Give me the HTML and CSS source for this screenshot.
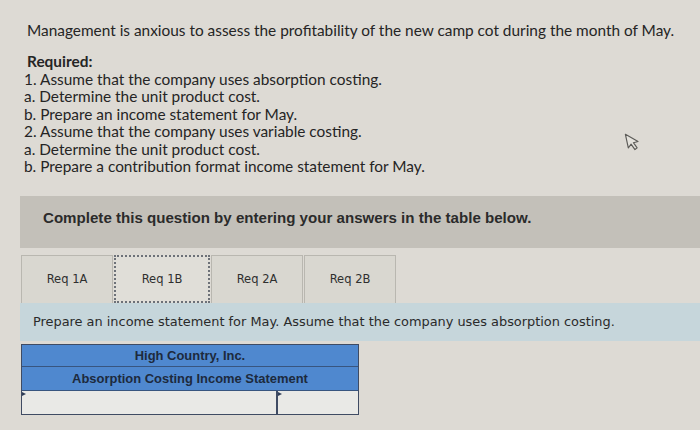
FILE: index.html
```html
<!DOCTYPE html>
<html>
<head>
<meta charset="utf-8">
<link rel="stylesheet" href="styles.css">
</head>
<body>
<div class="page">
  <div class="question">
    <p class="intro">Management is anxious to assess the profitability of the new camp cot during the month of May.</p>
    <div class="required">
      <div class="req-title">Required:</div>
      <div>1. Assume that the company uses absorption costing.</div>
      <div>a. Determine the unit product cost.</div>
      <div>b. Prepare an income statement for May.</div>
      <div>2. Assume that the company uses variable costing.</div>
      <div>a. Determine the unit product cost.</div>
      <div>b. Prepare a contribution format income statement for May.</div>
    </div>
  </div>
  <div class="band">Complete this question by entering your answers in the table below.</div>
  <div class="tabs">
    <div class="tab">Req 1A</div>
    <div class="tab active">Req 1B</div>
    <div class="tab">Req 2A</div>
    <div class="tab">Req 2B</div>
  </div>
  <div class="instr">Prepare an income statement for May. Assume that the company uses absorption costing.</div>
  <div class="stmt">
    <div class="hrow first">High Country, Inc.</div>
    <div class="hrow">Absorption Costing Income Statement</div>
    <div class="irow">
      <div class="cell c1"><span class="mark"></span></div>
      <div class="cell c2"><span class="mark"></span></div>
    </div>
  </div>
  <svg class="cursor" width="17" height="21" viewBox="0 0 14 18">
    <path d="M1.5 1.5 L1.5 13.5 L4.5 10.8 L6.8 16 L8.9 15 L6.7 10 L10.8 9.8 Z" fill="#e4e2dc" stroke="#5c5b58" stroke-width="1" stroke-linejoin="round"/>
  </svg>
</div>
</body>
</html>
```
FILE: styles.css
```css
html, body {
  margin: 0;
  padding: 0;
}
body {
  background: #dddad4;
  width: 700px;
  height: 430px;
  overflow: hidden;
}
.page {
  position: relative;
  width: 700px;
  height: 430px;
  color: #2a2a2a;
}
.question {
  padding: 20px 0 0 27px;
  font-family: Lato, "Open Sans", sans-serif;
  font-size: 15.4px;
  color: #252525;
}
.intro {
  margin: 0;
  line-height: 20px;
}
.required {
  margin-top: 13px;
  line-height: 17.5px;
}
.required > div {
  margin-left: -3px;
}
.req-title {
  font-weight: bold;
  margin-left: 0 !important;
}
.band {
  margin: 20px 0 0 20px;
  height: 52px;
  box-sizing: border-box;
  background: #c3c0b9;
  display: flex;
  align-items: center;
  padding: 0 0 8px 23px;
  font-family: "Liberation Sans", Arial, sans-serif;
  font-weight: bold;
  font-size: 15.1px;
  color: #2b2b2b;
}
.tabs {
  display: flex;
  margin: 7px 0 0 21px;
  height: 48px;
  align-items: stretch;
}
.tab {
  width: 92px;
  box-sizing: border-box;
  border: 1px solid #b9b7b0;
  border-bottom: none;
  background: #d9d7d0;
  display: flex;
  align-items: center;
  justify-content: center;
  font-family: "DejaVu Sans", Verdana, sans-serif;
  font-size: 11.5px;
  color: #2f2f2f;
  margin-right: 1px;
}
.tab.active {
  width: 96px;
  background: #e0ded8;
  border: 2px dotted #6d7178;
}
.instr {
  margin-left: 20px;
  height: 38px;
  background: #c6d6db;
  display: flex;
  align-items: center;
  padding-left: 13px;
  font-family: "DejaVu Sans", Verdana, sans-serif;
  font-size: 12.9px;
  color: #2a2a2a;
}
.stmt {
  margin: 3px 0 0 21px;
  width: 338px;
  border: 1.5px solid #3f4b63;
  box-sizing: border-box;
}
.hrow {
  height: 23px;
  background: #4f88cf;
  display: flex;
  align-items: center;
  justify-content: center;
  font-family: "Liberation Sans", Arial, sans-serif;
  font-weight: bold;
  font-size: 12.95px;
  color: #1d2a3d;
  border-bottom: 1px solid #38557f;
}
.hrow.first {
  height: 21px;
}
.irow {
  display: flex;
  height: 23px;
}
.cell {
  position: relative;
  background: #e9e9e6;
}
.c1 {
  width: 254px;
  border-right: 2px solid #3f4b63;
}
.c2 {
  flex: 1;
}
.mark {
  position: absolute;
  left: 0;
  top: 1px;
  width: 0;
  height: 0;
  border-top: 2px solid transparent;
  border-bottom: 2px solid transparent;
  border-left: 4px solid #2f3d57;
}
.cursor {
  position: absolute;
  left: 625px;
  top: 131px;
  transform: rotate(-12deg);
}
```
